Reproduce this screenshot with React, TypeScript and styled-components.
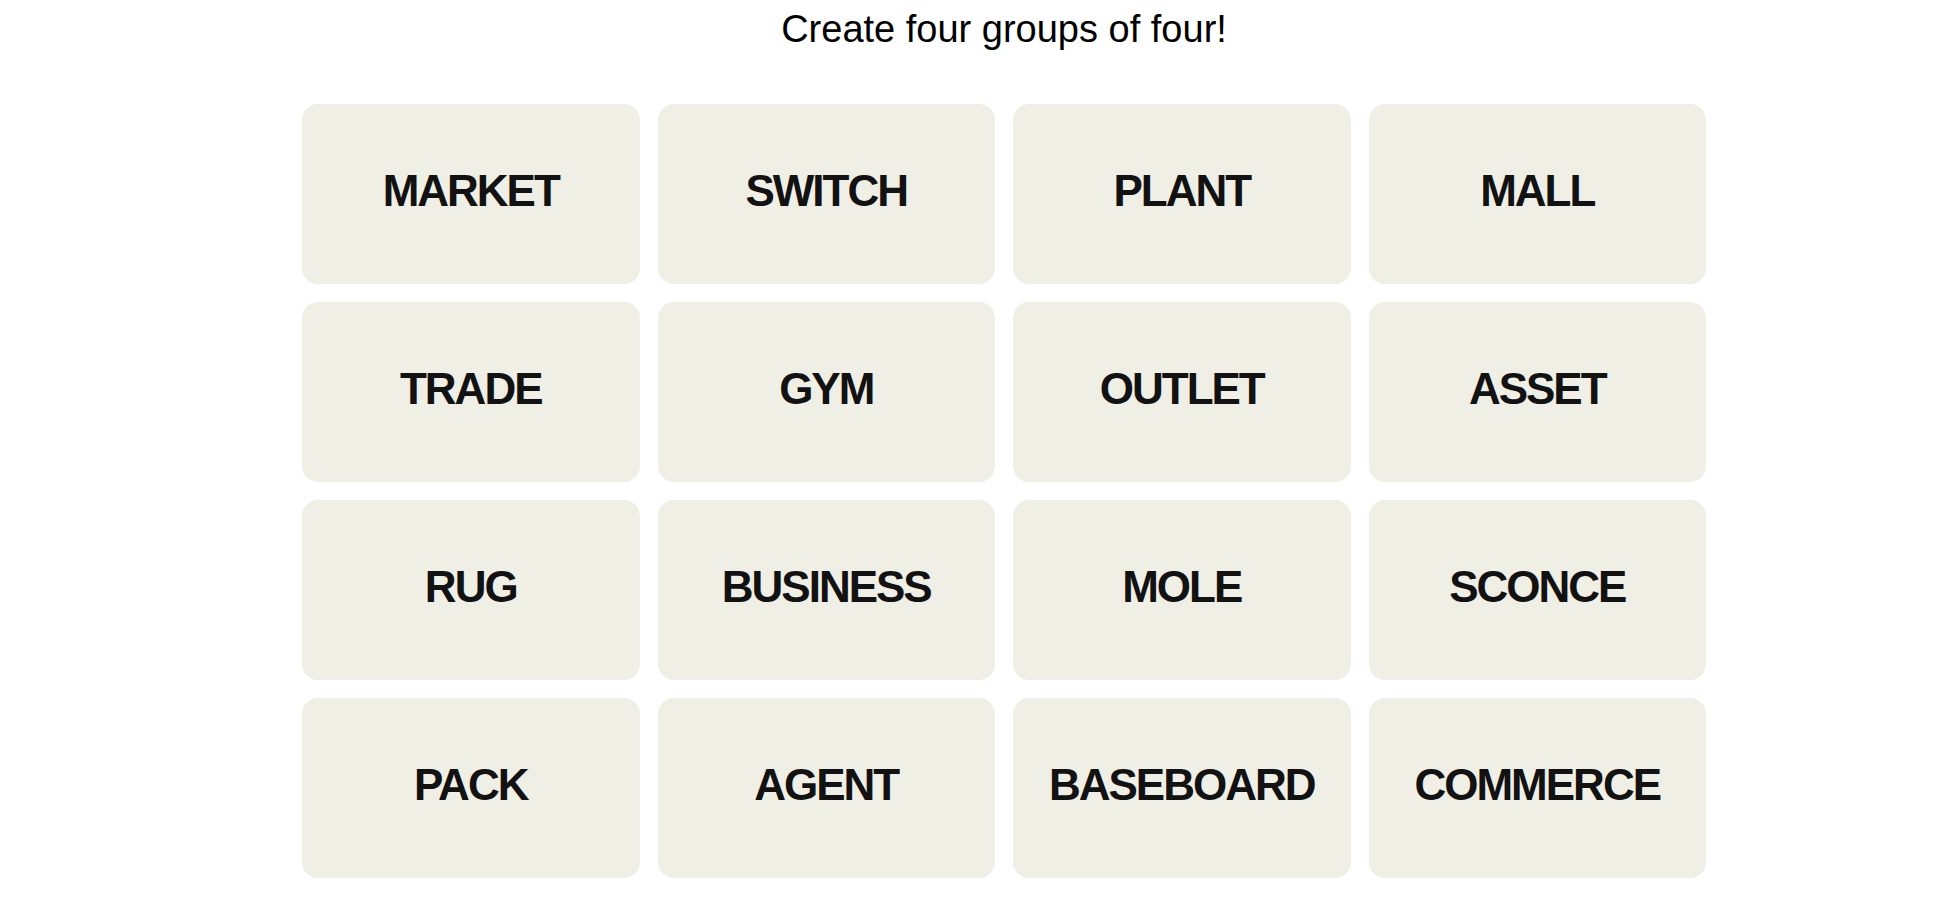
import styled, { createGlobalStyle } from "styled-components";

const words: string[] = [
  "MARKET", "SWITCH", "PLANT", "MALL",
  "TRADE", "GYM", "OUTLET", "ASSET",
  "RUG", "BUSINESS", "MOLE", "SCONCE",
  "PACK", "AGENT", "BASEBOARD", "COMMERCE",
];

const GlobalStyle = createGlobalStyle`
  html, body {
    margin: 0;
    padding: 0;
    background: #ffffff;
    font-family: "Liberation Sans", Arial, sans-serif;
  }
`;

const Page = styled.main`
  width: 1404px;
  margin-left: 302px;
  padding-top: 7px;
  display: flex;
  flex-direction: column;
  align-items: center;
`;

const Title = styled.h1`
  margin: 0 0 53px 0;
  font-size: 38px;
  font-weight: 400;
  color: #000000;
  line-height: 44px;
`;

const Board = styled.div`
  width: 100%;
  display: grid;
  grid-template-columns: repeat(4, 1fr);
  grid-auto-rows: 180px;
  gap: 18px;
`;

const Tile = styled.button`
  border: none;
  border-radius: 16px;
  background: #efefe6;
  color: #121212;
  font-family: "Liberation Sans", Arial, sans-serif;
  font-size: 44px;
  font-weight: 700;
  letter-spacing: -2px;
  display: flex;
  align-items: center;
  justify-content: center;
  padding: 0 0 6px 0;
  cursor: pointer;
`;

const App = () => {
  return (
    <>
      <GlobalStyle />
      <Page>
        <Title>Create four groups of four!</Title>
        <Board>
          {words.map((word) => (
            <Tile key={word}>{word}</Tile>
          ))}
        </Board>
      </Page>
    </>
  );
};

export default App;
